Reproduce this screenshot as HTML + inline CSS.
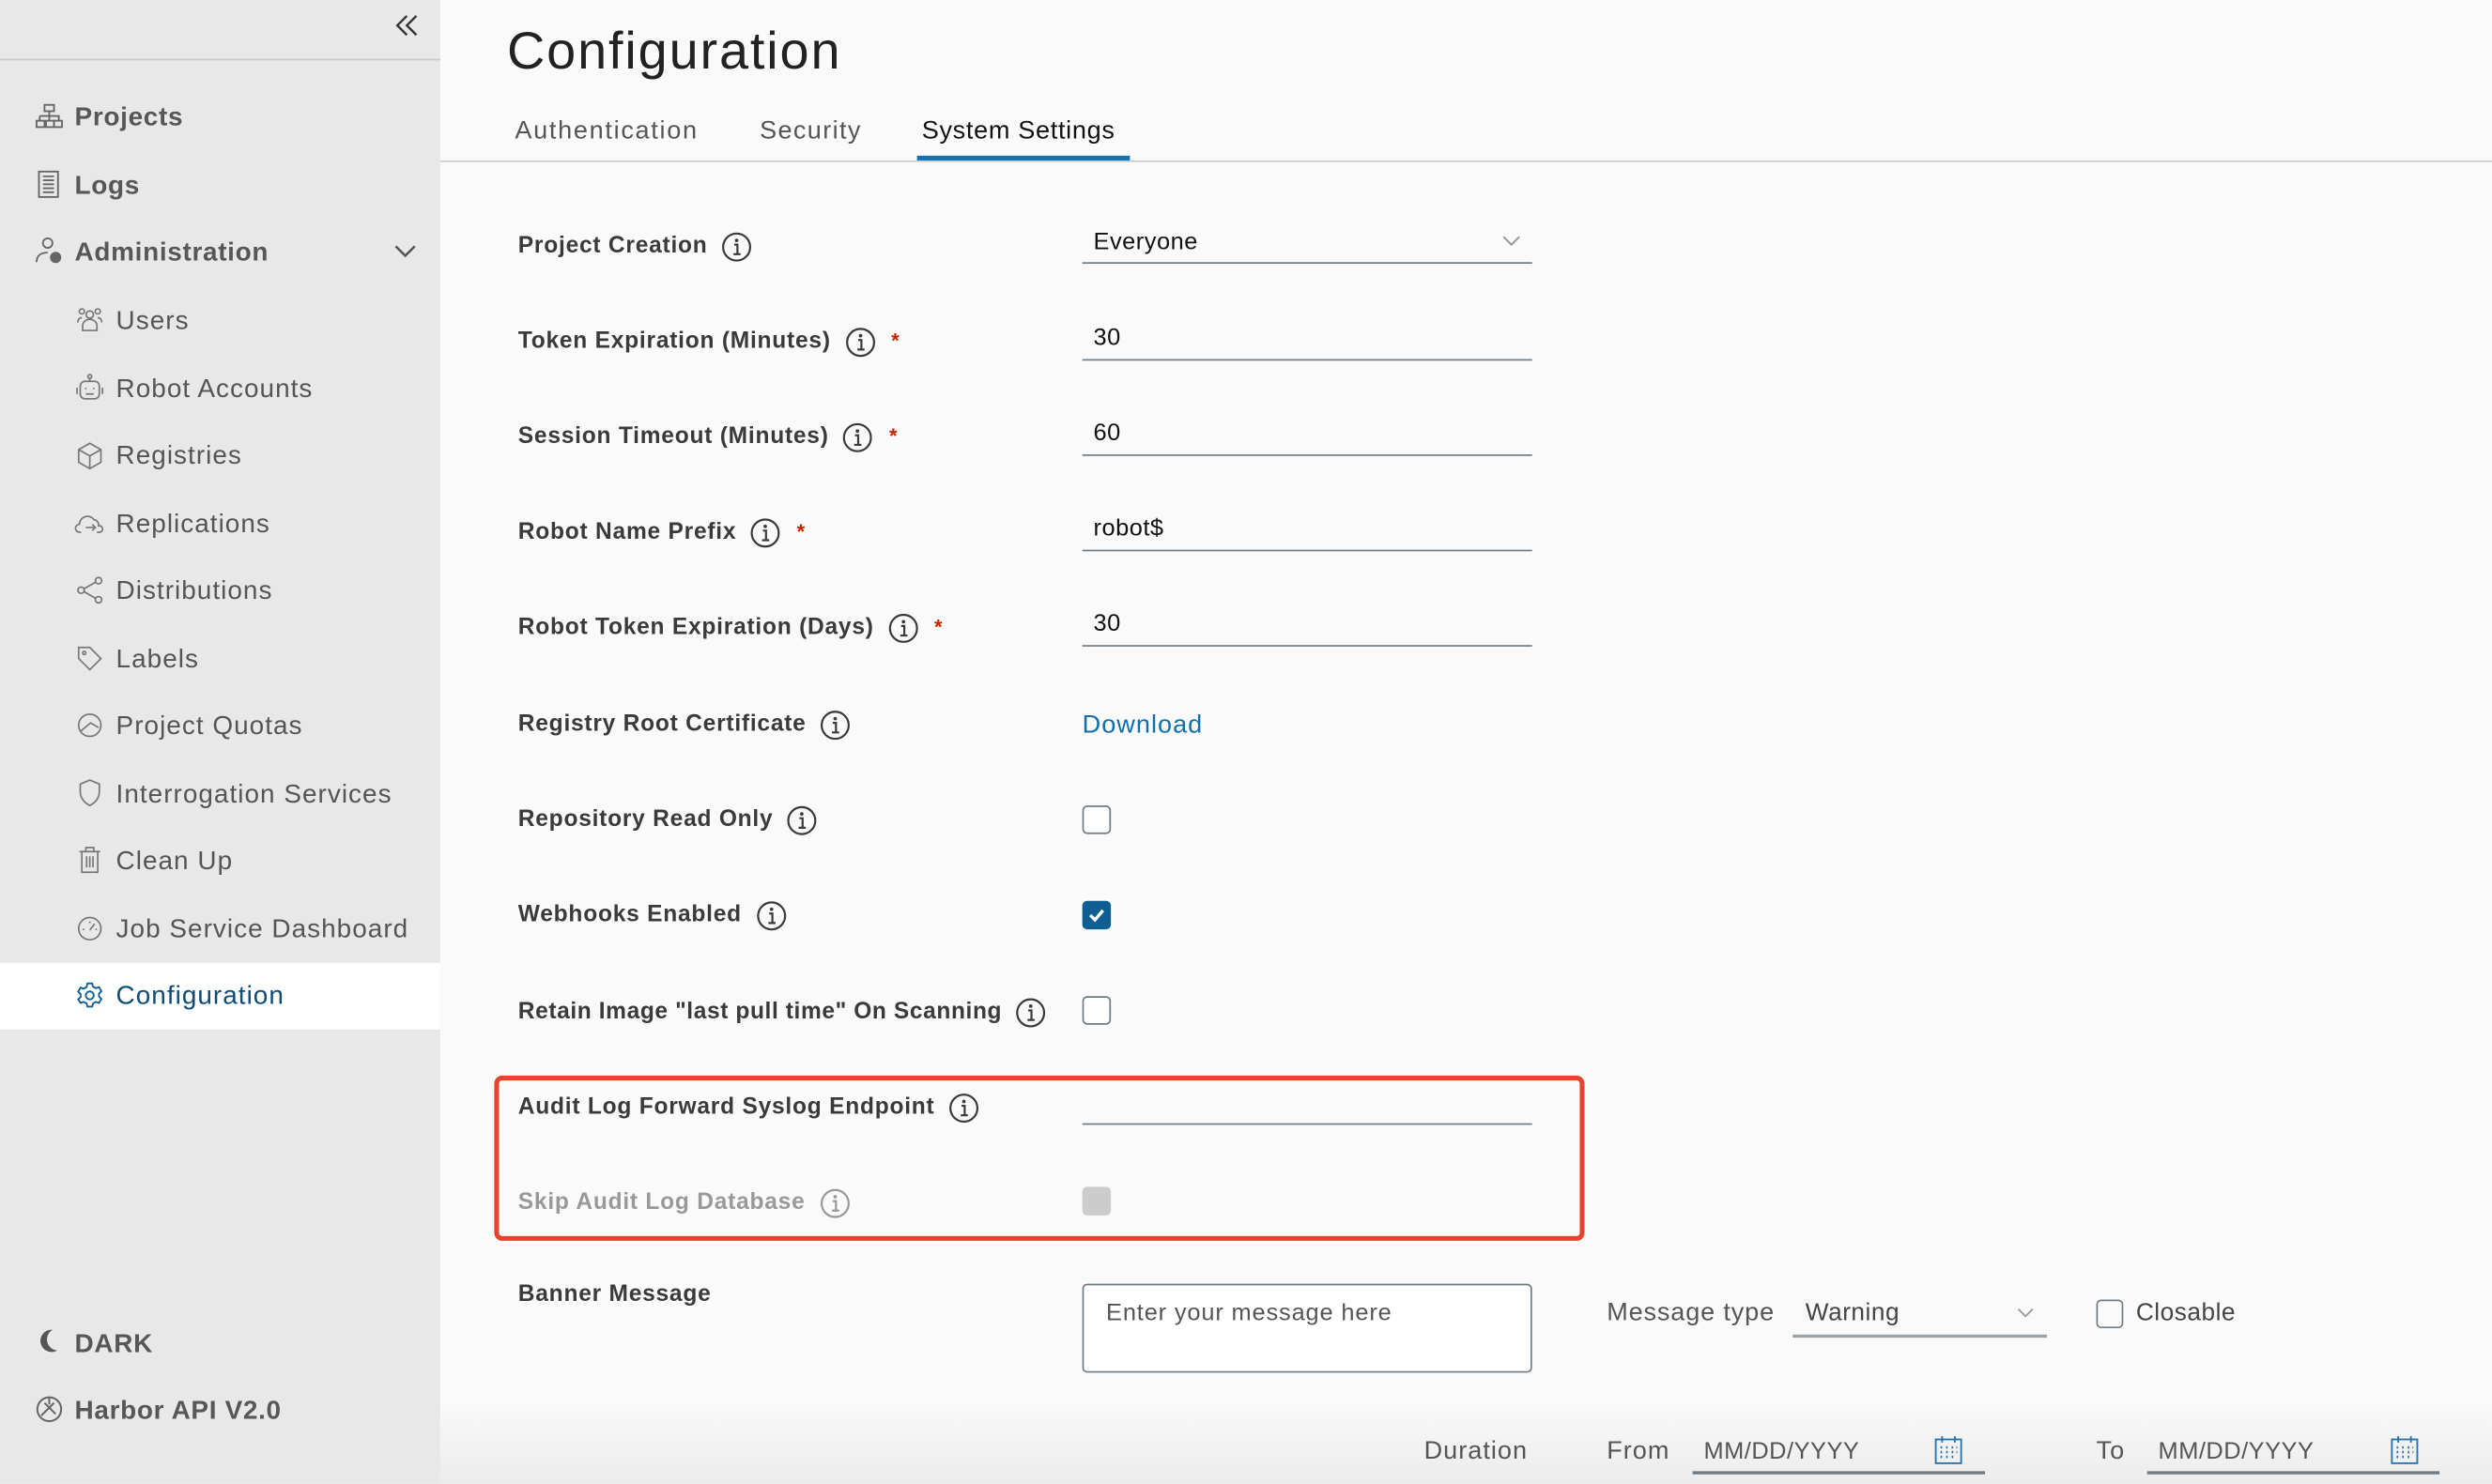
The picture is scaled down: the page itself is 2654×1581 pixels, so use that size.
<!DOCTYPE html>
<html><head><meta charset="utf-8"><style>
html,body{margin:0;padding:0;width:2654px;height:1580px;overflow:hidden;background:#fafafa}
#w{position:absolute;left:0;top:0;width:1568px;height:934px;transform:scale(1.69260);transform-origin:0 0;font-family:"Liberation Sans",sans-serif;color:#333}
.a{position:absolute;white-space:nowrap;line-height:20px}
#sb{position:absolute;left:0;top:0;width:277px;height:934px;background:#e8e8e8}
.n{font-size:16.5px;color:#555;letter-spacing:0.6px}
.nb{font-weight:bold;font-size:16.5px;color:#575757;letter-spacing:0.4px}
.ic{position:absolute}
.l{font-weight:bold;font-size:14.5px;color:#3a3a3a;letter-spacing:0.45px;display:flex;align-items:center}
.l svg{margin-left:9px;flex:none}
.l .st{margin-left:10px}
.in{position:absolute;left:681px;width:283px;border-bottom:1.5px solid #6f7b84}
.v{font-size:15px;color:#111;letter-spacing:0.3px}
.cb{position:absolute;left:681px;width:16px;height:16px;border:1.5px solid #6f7b84;border-radius:3px;background:#fff}
.st{color:#c92100;font-size:13px;font-weight:bold}
</style></head><body><div id="w">
<div id="sb">
 <svg class="ic" style="left:248px;top:9px" width="16" height="14" viewBox="0 0 16 14" fill="none" stroke="#333" stroke-width="1.4"><path d="M8 1L2 7l6 6M14 1L8 7l6 6"/></svg>
 <div style="position:absolute;left:0;top:37px;width:277px;height:1px;background:#c8c8c8"></div>
 <svg class="ic" style="left:22px;top:65px" width="18" height="18" viewBox="0 0 18 18" fill="none" stroke="#666" stroke-width="1.1"><rect x="6" y="1" width="6" height="4"/><path d="M9 5v3M3 8h12v3M3 8v3M9 8v3"/><rect x="1" y="11" width="5" height="4"/><rect x="7" y="11" width="5" height="4"/><rect x="12" y="11" width="5" height="4"/></svg>
 <div class="a nb" style="left:47px;top:64px">Projects</div>
 <svg class="ic" style="left:23px;top:107px" width="16" height="18" viewBox="0 0 16 18" fill="none" stroke="#666" stroke-width="1.1"><rect x="1.5" y="1" width="12" height="16"/><path d="M4 4h7M4 6.5h7M4 9h7M4 11.5h7M4 14h7"/></svg>
 <div class="a nb" style="left:47px;top:107px">Logs</div>
 <svg class="ic" style="left:22px;top:149px" width="18" height="18" viewBox="0 0 18 18" fill="none" stroke="#666" stroke-width="1.1"><circle cx="8" cy="4" r="3"/><path d="M1 16c0-5 4-6 7-6"/><circle cx="13" cy="13" r="3" fill="#666"/></svg>
 <div class="a nb" style="left:47px;top:149px">Administration</div>
 <svg class="ic" style="left:248px;top:154px" width="14" height="9" viewBox="0 0 14 9" fill="none" stroke="#555" stroke-width="1.5"><path d="M1 1l6 6 6-6"/></svg>
 <div class="a n" style="left:73px;top:192px">Users</div>
 <div class="a n" style="left:73px;top:235px">Robot Accounts</div>
 <div class="a n" style="left:73px;top:277px">Registries</div>
 <div class="a n" style="left:73px;top:320px">Replications</div>
 <div class="a n" style="left:73px;top:362px">Distributions</div>
 <div class="a n" style="left:73px;top:405px">Labels</div>
 <div class="a n" style="left:73px;top:447px">Project Quotas</div>
 <div class="a n" style="left:73px;top:490px">Interrogation Services</div>
 <div class="a n" style="left:73px;top:532px">Clean Up</div>
 <div class="a n" style="left:73px;top:575px">Job Service Dashboard</div>
 <div style="position:absolute;left:0;top:606px;width:277px;height:42px;background:#fff"></div>
 <div class="a n" style="left:73px;top:617px;color:#0f4b73">Configuration</div>
 <svg class="ic" style="left:48px;top:193px" width="17" height="16" viewBox="0 0 17 16" fill="none" stroke="#777" stroke-width="1"><circle cx="8.5" cy="5" r="2.3"/><path d="M4 15v-3a4.5 4 0 0 1 9 0v3z"/><circle cx="3.5" cy="3" r="1.6"/><circle cx="13.5" cy="3" r="1.6"/><path d="M1 10c0-2 1-3 2.5-3M16 10c0-2-1-3-2.5-3"/></svg>
 <svg class="ic" style="left:47px;top:235px" width="19" height="18" viewBox="0 0 19 18" fill="none" stroke="#777" stroke-width="1"><rect x="3.5" y="5" width="12" height="11" rx="3"/><circle cx="9.5" cy="2" r="1.2"/><path d="M9.5 3v2M7 9v1M12 9v1M7 13h5M1.5 9v4M17.5 9v4"/></svg>
 <svg class="ic" style="left:48px;top:278px" width="17" height="18" viewBox="0 0 17 18" fill="none" stroke="#777" stroke-width="1"><path d="M8.5 1l7 4v8l-7 4-7-4V5zM1.5 5l7 4 7-4M8.5 9v8"/></svg>
 <svg class="ic" style="left:47px;top:321px" width="19" height="16" viewBox="0 0 19 16" fill="none" stroke="#777" stroke-width="1"><path d="M4 14H3a2.5 2.5 0 0 1 0-5 5 5 0 0 1 9-3 3.5 3.5 0 0 1 3 4 2 2 0 0 1 1 4h-2M7 11h6M11 9l2 2-2 2"/></svg>
 <svg class="ic" style="left:48px;top:363px" width="17" height="17" viewBox="0 0 17 17" fill="none" stroke="#777" stroke-width="1"><circle cx="3" cy="8.5" r="2"/><circle cx="14" cy="2.5" r="2"/><circle cx="14" cy="14.5" r="2"/><path d="M5 7.5l7-4M5 9.5l7 4"/></svg>
 <svg class="ic" style="left:48px;top:406px" width="17" height="17" viewBox="0 0 17 17" fill="none" stroke="#777" stroke-width="1"><path d="M1.5 1.5h7l7 7-7 7-7-7z"/><circle cx="5" cy="5" r="1"/></svg>
 <svg class="ic" style="left:48px;top:448px" width="17" height="17" viewBox="0 0 17 17" fill="none" stroke="#777" stroke-width="1"><circle cx="8.5" cy="8.5" r="7"/><path d="M3 12l6-5 5 3"/></svg>
 <svg class="ic" style="left:49px;top:490px" width="15" height="18" viewBox="0 0 15 18" fill="none" stroke="#777" stroke-width="1"><path d="M7.5 1l6 2.5v5c0 4-3 7-6 8.5-3-1.5-6-4.5-6-8.5v-5z"/></svg>
 <svg class="ic" style="left:49px;top:532px" width="15" height="18" viewBox="0 0 15 18" fill="none" stroke="#777" stroke-width="1"><path d="M1 4h13M5 4V1.5h5V4M2.5 4v13h10V4M5.5 7v7M7.5 7v7M9.5 7v7"/></svg>
 <svg class="ic" style="left:48px;top:576px" width="17" height="17" viewBox="0 0 17 17" fill="none" stroke="#777" stroke-width="1"><circle cx="8.5" cy="8.5" r="7"/><path d="M8.5 9.5l3-4M4 9h1M12 9h1M8.5 4v1"/></svg>
 <svg class="ic" style="left:48px;top:618px" width="17" height="17" viewBox="0 0 17 17" fill="none" stroke="#0f5e93" stroke-width="1.1"><circle cx="8.5" cy="8.5" r="2.5"/><path d="M7 1h3l.5 2 1.8 1 2-.7 1.5 2.6-1.5 1.4v2l1.5 1.4-1.5 2.6-2-.7-1.8 1-.5 2H7l-.5-2-1.8-1-2 .7L1.2 11l1.5-1.4v-2L1.2 6.2l1.5-2.6 2 .7 1.8-1z"/></svg>
 <svg class="ic" style="left:23px;top:836px" width="14" height="16" viewBox="0 0 14 16"><path d="M10 1a7 7 0 1 0 3 13A7 7 0 0 1 10 1z" fill="#555"/></svg>
 <div class="a nb" style="left:47px;top:836px">DARK</div>
 <svg class="ic" style="left:22px;top:878px" width="18" height="18" viewBox="0 0 18 18" fill="none" stroke="#666" stroke-width="1.2"><circle cx="9" cy="9" r="7.5"/><path d="M4 13l8-8M6 5l7 7M9 2v4"/></svg>
 <div class="a nb" style="left:47px;top:878px">Harbor API V2.0</div>
</div>

<div class="a" style="left:319px;top:12px;font-size:33px;line-height:40px;color:#222;letter-spacing:1.1px">Configuration</div>
<div class="a" style="left:324px;top:73px;font-size:16px;color:#555;letter-spacing:1px">Authentication</div>
<div class="a" style="left:478px;top:73px;font-size:16px;color:#555;letter-spacing:0.8px">Security</div>
<div class="a" style="left:580px;top:73px;font-size:16px;color:#111;letter-spacing:0.4px">System Settings</div>
<div style="position:absolute;left:277px;top:101px;width:1291px;height:1px;background:#ccc"></div>
<div style="position:absolute;left:577px;top:98px;width:134px;height:3px;background:#0f73b5"></div>

<svg width="0" height="0" style="position:absolute"><defs><g id="info"><circle cx="9.5" cy="9.5" r="8.5" fill="none" stroke="currentColor" stroke-width="1.3"/><circle cx="9.5" cy="5.3" r="1.1" fill="currentColor"/><path d="M8 8h2v6M7.5 14h4.5" fill="none" stroke="currentColor" stroke-width="1.3"/></g></defs></svg>

<div class="a l" style="left:326px;top:145px">Project Creation<svg width="19" height="19"><use href="#info"/></svg></div>
<div class="a v" style="left:688px;top:143px">Everyone</div>
<svg class="ic" style="left:945px;top:148px" width="12" height="8" viewBox="0 0 12 8" fill="none" stroke="#999" stroke-width="1.2"><path d="M1 1l5 5 5-5"/></svg>
<div class="in" style="top:165px"></div>

<div class="a l" style="left:326px;top:205px">Token Expiration (Minutes)<svg width="19" height="19"><use href="#info"/></svg><span class="st">*</span></div>
<div class="a v" style="left:688px;top:203px">30</div>
<div class="in" style="top:226px"></div>

<div class="a l" style="left:326px;top:265px">Session Timeout (Minutes)<svg width="19" height="19"><use href="#info"/></svg><span class="st">*</span></div>
<div class="a v" style="left:688px;top:263px">60</div>
<div class="in" style="top:286px"></div>

<div class="a l" style="left:326px;top:325px">Robot Name Prefix<svg width="19" height="19"><use href="#info"/></svg><span class="st">*</span></div>
<div class="a v" style="left:688px;top:323px">robot$</div>
<div class="in" style="top:346px"></div>

<div class="a l" style="left:326px;top:385px">Robot Token Expiration (Days)<svg width="19" height="19"><use href="#info"/></svg><span class="st">*</span></div>
<div class="a v" style="left:688px;top:383px">30</div>
<div class="in" style="top:406px"></div>

<div class="a l" style="left:326px;top:446px">Registry Root Certificate<svg width="19" height="19"><use href="#info"/></svg></div>
<div class="a" style="left:681px;top:447px;font-size:16px;color:#0f6fad;letter-spacing:0.6px">Download</div>

<div class="a l" style="left:326px;top:506px">Repository Read Only<svg width="19" height="19"><use href="#info"/></svg></div>
<div class="cb" style="top:507px"></div>

<div class="a l" style="left:326px;top:566px">Webhooks Enabled<svg width="19" height="19"><use href="#info"/></svg></div>
<div class="cb" style="top:567px;background:#0f5e93;border-color:#0f5e93"><svg width="16" height="16" viewBox="0 0 16 16" style="position:absolute;left:0;top:0"><path d="M4 8l3 3 5-6" fill="none" stroke="#fff" stroke-width="2"/></svg></div>

<div class="a l" style="left:326px;top:627px;letter-spacing:0.35px">Retain Image "last pull time" On Scanning<svg width="19" height="19"><use href="#info"/></svg></div>
<div class="cb" style="top:627px"></div>

<div style="position:absolute;left:311px;top:677px;width:680px;height:98px;border:3px solid #e8432c;border-radius:5px"></div>
<div class="a l" style="left:326px;top:687px">Audit Log Forward Syslog Endpoint<svg width="19" height="19"><use href="#info"/></svg></div>
<div class="in" style="top:707px"></div>
<div class="a l" style="left:326px;top:747px;color:#999">Skip Audit Log Database<svg width="19" height="19" style="color:#999"><use href="#info"/></svg></div>
<div style="position:absolute;left:681px;top:747px;width:18px;height:18px;border-radius:3px;background:#ccc"></div>

<div class="a l" style="left:326px;top:805px">Banner Message</div>
<div style="position:absolute;left:681px;top:808px;width:281px;height:54px;border:1.5px solid #6f7b84;border-radius:3px;background:#fff"></div>
<div class="a" style="left:696px;top:817px;font-size:15px;color:#555;letter-spacing:0.5px">Enter your message here</div>
<div class="a" style="left:1011px;top:817px;font-size:16px;color:#555;letter-spacing:0.5px">Message type</div>
<div class="a" style="left:1136px;top:817px;font-size:15.5px;color:#444;letter-spacing:0.3px">Warning</div>
<svg class="ic" style="left:1269px;top:823px" width="11" height="7" viewBox="0 0 11 7" fill="none" stroke="#999" stroke-width="1.1"><path d="M1 1l4.5 4.5L10 1"/></svg>
<div style="position:absolute;left:1128px;top:840px;width:160px;height:1.5px;background:#9aa2a8"></div>
<div style="position:absolute;left:1319px;top:818px;width:15px;height:16px;border:1.5px solid #6f7b84;border-radius:3px"></div>
<div class="a" style="left:1344px;top:817px;font-size:15.5px;color:#444;letter-spacing:0.3px">Closable</div>

<div style="position:absolute;left:277px;top:880px;width:1291px;height:54px;background:linear-gradient(#fafafa,#ececec)"></div>
<div class="a" style="left:896px;top:904px;font-size:16px;color:#555;letter-spacing:0.6px">Duration</div>
<div class="a" style="left:1011px;top:904px;font-size:16px;color:#555;letter-spacing:0.6px">From</div>
<div class="a" style="left:1072px;top:904px;font-size:15px;color:#555;letter-spacing:0.3px">MM/DD/YYYY</div>
<div style="position:absolute;left:1065px;top:926px;width:184px;height:1.5px;background:#6f7b84"></div>
<div class="a" style="left:1319px;top:904px;font-size:16px;color:#555;letter-spacing:0.6px">To</div>
<div class="a" style="left:1358px;top:904px;font-size:15px;color:#555;letter-spacing:0.3px">MM/DD/YYYY</div>
<div style="position:absolute;left:1351px;top:926px;width:184px;height:1.5px;background:#6f7b84"></div>
<svg class="ic" style="left:1217px;top:903px" width="18" height="19" viewBox="0 0 18 19" fill="none" stroke="#2a74ad" stroke-width="1.1"><rect x="1" y="3" width="16" height="15"/><path d="M5 1v4M13 1v4"/><path d="M4 8h1M7.5 8h1M11 8h1M14 8h.5M4 11h1M7.5 11h1M11 11h1M14 11h.5M4 14h1M7.5 14h1M11 14h1" stroke-width="1.5"/></svg>
<svg class="ic" style="left:1504px;top:903px" width="18" height="19" viewBox="0 0 18 19" fill="none" stroke="#2a74ad" stroke-width="1.1"><rect x="1" y="3" width="16" height="15"/><path d="M5 1v4M13 1v4"/><path d="M4 8h1M7.5 8h1M11 8h1M14 8h.5M4 11h1M7.5 11h1M11 11h1M14 11h.5M4 14h1M7.5 14h1M11 14h1" stroke-width="1.5"/></svg>
</div></body></html>
